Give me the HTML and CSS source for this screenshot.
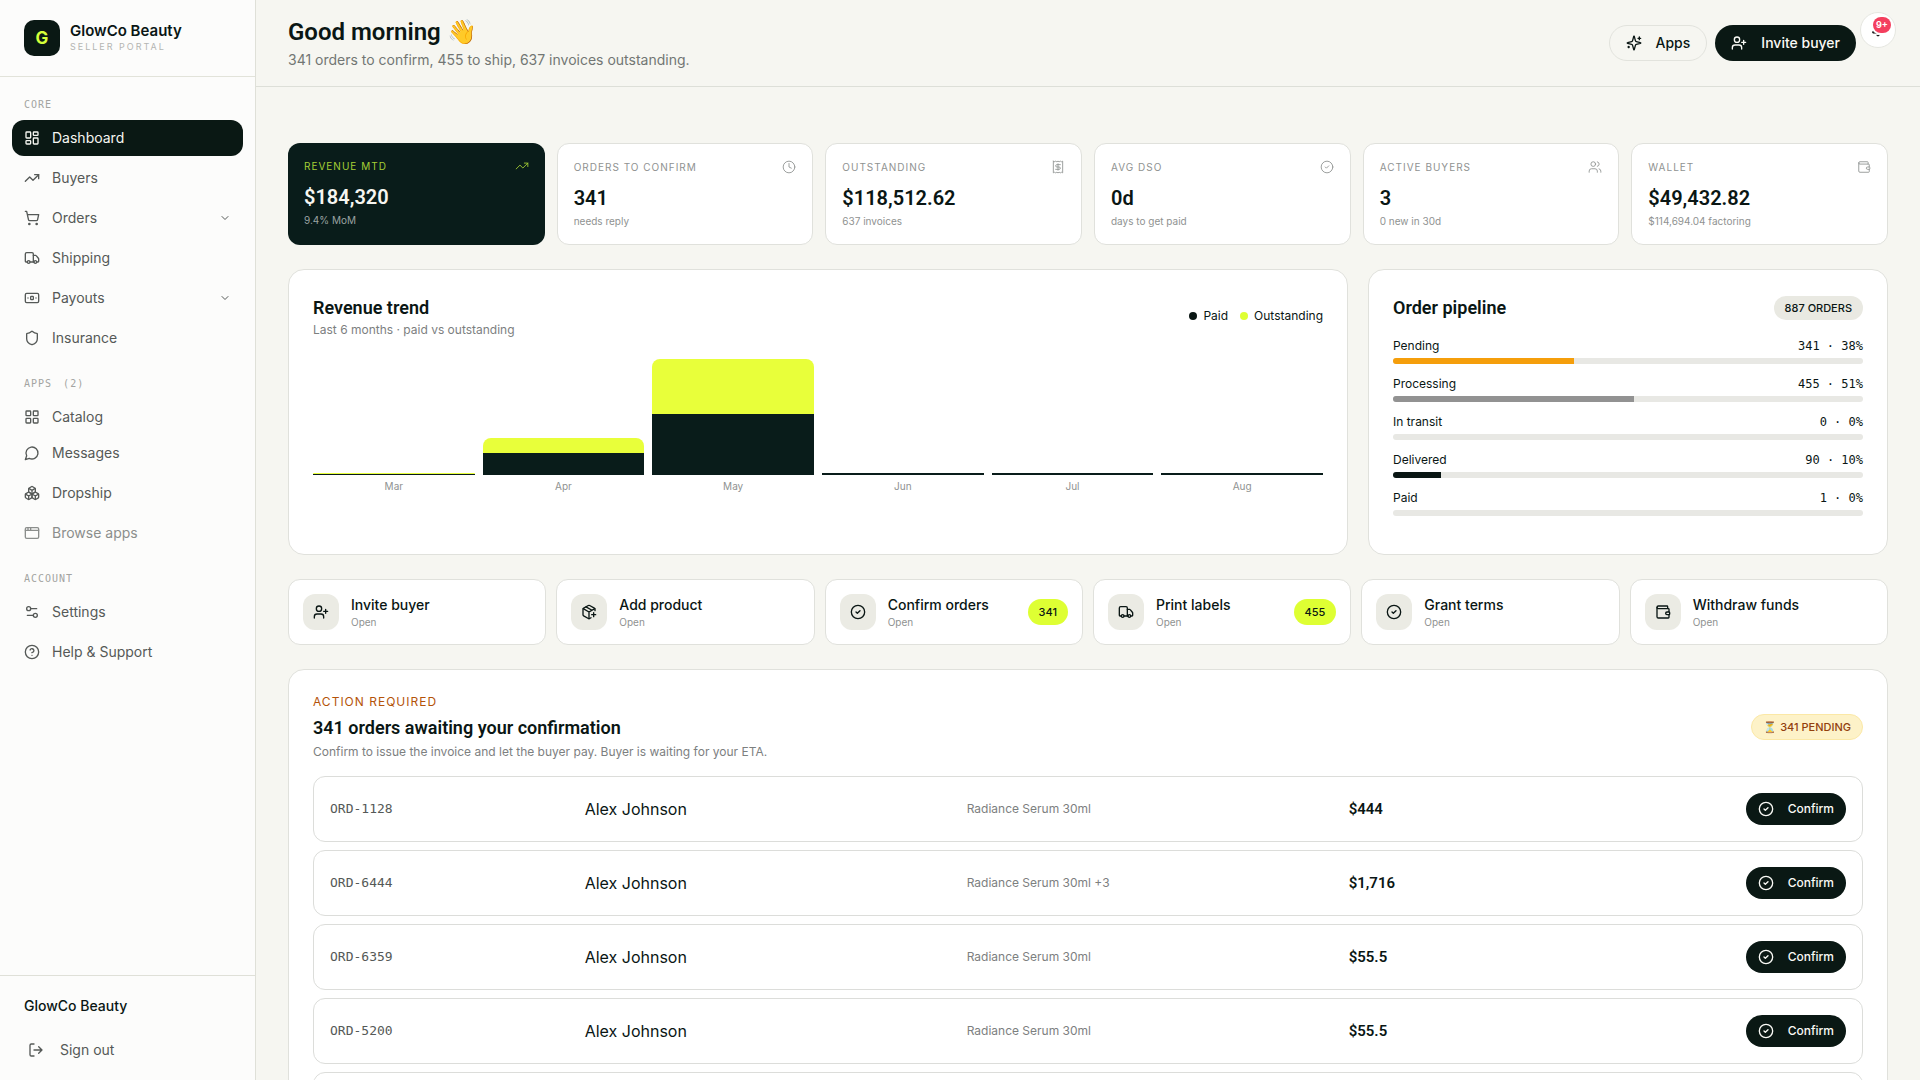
FILE: index.html
```html
<!DOCTYPE html>
<html lang="en">
<head>
    <meta charset="UTF-8">
    <meta name="viewport" content="width=device-width, initial-scale=1.0">
    <title>GlowCo Beauty - Seller Portal</title>
    <link rel="stylesheet" href="styles.css">
</head>
<body>
    <!-- Icon sprite -->
    <svg class="sprite" aria-hidden="true">
        <symbol id="i-dashboard" viewBox="0 0 24 24"><rect x="3" y="3" width="7" height="9" rx="1"/><rect x="14" y="3" width="7" height="5" rx="1"/><rect x="14" y="12" width="7" height="9" rx="1"/><rect x="3" y="16" width="7" height="5" rx="1"/></symbol>
        <symbol id="i-trend" viewBox="0 0 24 24"><path d="m22 7-8.5 8.5-5-5L2 17"/><path d="M16 7h6v6"/></symbol>
        <symbol id="i-cart" viewBox="0 0 24 24"><circle cx="8" cy="21" r="1"/><circle cx="19" cy="21" r="1"/><path d="M2 2h2l2.7 12.4a2 2 0 0 0 2 1.6h9.7a2 2 0 0 0 2-1.6L22 7H5.1"/></symbol>
        <symbol id="i-truck" viewBox="0 0 24 24"><path d="M14 18V6a2 2 0 0 0-2-2H4a2 2 0 0 0-2 2v11a1 1 0 0 0 1 1h2"/><path d="M15 18H9"/><path d="M19 18h2a1 1 0 0 0 1-1v-3.7a1 1 0 0 0-.2-.6l-3.5-4.3a1 1 0 0 0-.8-.4H14"/><circle cx="17" cy="18" r="2"/><circle cx="7" cy="18" r="2"/></symbol>
        <symbol id="i-banknote" viewBox="0 0 24 24"><rect x="2" y="5" width="20" height="14" rx="2"/><rect x="10" y="9.5" width="4" height="5" rx="1"/><path d="M6 12h.01M18 12h.01"/></symbol>
        <symbol id="i-shield" viewBox="0 0 24 24"><path d="M20 13c0 5-3.5 7.5-7.7 9a1 1 0 0 1-.6 0C7.5 20.5 4 18 4 13V6a1 1 0 0 1 1-1c2 0 4.5-1.2 6.2-2.7a1.2 1.2 0 0 1 1.6 0C14.500 3.8 17 5 19 5a1 1 0 0 1 1 1z"/></symbol>
        <symbol id="i-grid" viewBox="0 0 24 24"><rect x="3" y="3" width="7" height="7" rx="1"/><rect x="14" y="3" width="7" height="7" rx="1"/><rect x="14" y="14" width="7" height="7" rx="1"/><rect x="3" y="14" width="7" height="7" rx="1"/></symbol>
        <symbol id="i-message" viewBox="0 0 24 24"><path d="M7.9 20A9 9 0 1 0 4 16.1L2 22Z"/></symbol>
        <symbol id="i-boxes" viewBox="0 0 24 24"><path d="M2.97 12.92A2 2 0 0 0 2 14.63v3.24a2 2 0 0 0 .97 1.71l3 1.8a2 2 0 0 0 2.06 0L12 19v-5.5l-5-3-4.03 2.42Z"/><path d="m7 16.5-4.74-2.85M7 16.5l5-3M7 16.5v5.17"/><path d="M12 13.5V19l3.97 2.38a2 2 0 0 0 2.06 0l3-1.8a2 2 0 0 0 .97-1.71v-3.24a2 2 0 0 0-.97-1.71L17 10.5l-5 3Z"/><path d="m17 16.5-5-3M17 16.5l4.74-2.85M17 16.5v5.17"/><path d="M7.97 4.42A2 2 0 0 0 7 6.13v4.37l5 3 5-3V6.13a2 2 0 0 0-.97-1.71l-3-1.8a2 2 0 0 0-2.06 0l-3 1.8Z"/><path d="M12 8 7.26 5.15M12 8l4.74-2.85M12 13.5V8"/></symbol>
        <symbol id="i-window" viewBox="0 0 24 24"><rect x="2" y="4" width="20" height="16" rx="2"/><path d="M10 4v4M2 8h20M6 4v4"/></symbol>
        <symbol id="i-settings" viewBox="0 0 24 24"><path d="M14 17H5M19 7h-9"/><circle cx="17" cy="17" r="3"/><circle cx="7" cy="7" r="3"/></symbol>
        <symbol id="i-help" viewBox="0 0 24 24"><circle cx="12" cy="12" r="10"/><path d="M9.1 9a3 3 0 0 1 5.8 1c0 2-3 3-3 3M12 17h.01"/></symbol>
        <symbol id="i-logout" viewBox="0 0 24 24"><path d="M9 21H5a2 2 0 0 1-2-2V5a2 2 0 0 1 2-2h4"/><path d="m16 17 5-5-5-5M21 12H9"/></symbol>
        <symbol id="i-chevron" viewBox="0 0 24 24"><path d="m6 9 6 6 6-6"/></symbol>
        <symbol id="i-sparkles" viewBox="0 0 24 24"><path d="M9.9 15.5A2 2 0 0 0 8.5 14.1l-6.1-1.6a.5.5 0 0 1 0-1L8.5 9.9A2 2 0 0 0 9.9 8.5l1.6-6.1a.5.5 0 0 1 1 0l1.6 6.1a2 2 0 0 0 1.4 1.4l6.1 1.6a.5.5 0 0 1 0 1l-6.1 1.6a2 2 0 0 0-1.4 1.4l-1.6 6.1a.5.5 0 0 1-1 0z"/><path d="M20 3v4M22 5h-4M4 17v2M5 18H3"/></symbol>
        <symbol id="i-user-plus" viewBox="0 0 24 24"><path d="M16 21v-2a4 4 0 0 0-4-4H6a4 4 0 0 0-4 4v2"/><circle cx="9" cy="7" r="4"/><path d="M19 8v6M22 11h-6"/></symbol>
        <symbol id="i-bell" viewBox="0 0 24 24"><path d="M10.3 21a2 2 0 0 0 3.4 0"/><path d="M3.3 15.3A1 1 0 0 0 4 17h16a1 1 0 0 0 .7-1.7C19.4 14 18 12.5 18 8A6 6 0 0 0 6 8c0 4.5-1.4 6-2.7 7.3"/></symbol>
        <symbol id="i-clock" viewBox="0 0 24 24"><circle cx="12" cy="12" r="10"/><path d="M12 6v6l4 2"/></symbol>
        <symbol id="i-receipt" viewBox="0 0 24 24"><path d="M4 2v20l2-1 2 1 2-1 2 1 2-1 2 1 2-1 2 1V2l-2 1-2-1-2 1-2-1-2 1-2-1-2 1Z"/><path d="M16 8h-6a2 2 0 1 0 0 4h4a2 2 0 1 1 0 4H8M12 17.5v-11"/></symbol>
        <symbol id="i-check" viewBox="0 0 24 24"><circle cx="12" cy="12" r="10"/><path d="m9 12 2 2 4-4"/></symbol>
        <symbol id="i-users" viewBox="0 0 24 24"><path d="M16 21v-2a4 4 0 0 0-4-4H6a4 4 0 0 0-4 4v2"/><circle cx="9" cy="7" r="4"/><path d="M22 21v-2a4 4 0 0 0-3-3.9M16 3.1a4 4 0 0 1 0 7.8"/></symbol>
        <symbol id="i-wallet" viewBox="0 0 24 24"><path d="M19 7V4a1 1 0 0 0-1-1H5a2 2 0 0 0 0 4h15a1 1 0 0 1 1 1v4h-3a2 2 0 0 0 0 4h3a1 1 0 0 0 1-1v-2a1 1 0 0 0-1-1"/><path d="M3 5v14a2 2 0 0 0 2 2h15a1 1 0 0 0 1-1v-4"/></symbol>
        <symbol id="i-package" viewBox="0 0 24 24"><path d="M16 16h6M19 13v6"/><path d="M21 10V8a2 2 0 0 0-1-1.7l-7-4a2 2 0 0 0-2 0l-7 4A2 2 0 0 0 3 8v8a2 2 0 0 0 1 1.7l7 4a2 2 0 0 0 2 0l2-1.1"/><path d="m7.5 4.3 9 5.1M3.3 7l8.7 5 8.7-5M12 22V12"/></symbol>
    </svg>

    <div class="layout">
        <aside class="sidebar">
            <div class="brand">
                <div class="brand-logo">G</div>
                <div>
                    <div class="brand-name">GlowCo Beauty</div>
                    <div class="brand-sub">SELLER PORTAL</div>
                </div>
            </div>

            <nav class="nav">
                <div class="nav-label">CORE</div>
                <ul class="nav-list">
                    <li><a href="#" class="nav-item active"><svg class="icon"><use href="#i-dashboard"/></svg>Dashboard</a></li>
                    <li><a href="#" class="nav-item"><svg class="icon"><use href="#i-trend"/></svg>Buyers</a></li>
                    <li><a href="#" class="nav-item"><svg class="icon"><use href="#i-cart"/></svg>Orders<svg class="icon chevron"><use href="#i-chevron"/></svg></a></li>
                    <li><a href="#" class="nav-item"><svg class="icon"><use href="#i-truck"/></svg>Shipping</a></li>
                    <li><a href="#" class="nav-item"><svg class="icon"><use href="#i-banknote"/></svg>Payouts<svg class="icon chevron"><use href="#i-chevron"/></svg></a></li>
                    <li><a href="#" class="nav-item"><svg class="icon"><use href="#i-shield"/></svg>Insurance</a></li>
                </ul>

                <div class="nav-label">APPS <span class="nav-count">(2)</span></div>
                <a href="#" class="nav-item"><svg class="icon"><use href="#i-grid"/></svg>Catalog</a>
                <ul class="nav-list">
                    <li><a href="#" class="nav-item"><svg class="icon"><use href="#i-message"/></svg>Messages</a></li>
                    <li><a href="#" class="nav-item"><svg class="icon"><use href="#i-boxes"/></svg>Dropship</a></li>
                    <li><a href="#" class="nav-item muted"><svg class="icon"><use href="#i-window"/></svg>Browse apps</a></li>
                </ul>

                <div class="nav-label">ACCOUNT</div>
                <ul class="nav-list">
                    <li><a href="#" class="nav-item"><svg class="icon"><use href="#i-settings"/></svg>Settings</a></li>
                    <li><a href="#" class="nav-item"><svg class="icon"><use href="#i-help"/></svg>Help &amp; Support</a></li>
                </ul>
            </nav>

            <div class="sidebar-footer">
                <div class="account-name">GlowCo Beauty</div>
                <button type="button" class="sign-out"><svg class="icon"><use href="#i-logout"/></svg>Sign out</button>
            </div>
        </aside>

        <main class="main">
            <header class="topbar">
                <div>
                    <h1>Good morning 👋</h1>
                    <p>341 orders to confirm, 455 to ship, 637 invoices outstanding.</p>
                </div>
                <div class="topbar-actions">
                    <button type="button" class="btn btn-outline"><svg class="icon"><use href="#i-sparkles"/></svg>Apps</button>
                    <button type="button" class="btn btn-dark"><svg class="icon"><use href="#i-user-plus"/></svg>Invite buyer</button>
                </div>
                <button type="button" class="bell" aria-label="Notifications">
                    <svg class="icon"><use href="#i-bell"/></svg>
                    <span class="bell-count">9+</span>
                </button>
            </header>

            <div class="content">
                <section class="kpis">
                    <div class="kpi kpi-dark">
                        <div class="kpi-head">REVENUE MTD<svg class="icon"><use href="#i-trend"/></svg></div>
                        <div class="kpi-value">$184,320</div>
                        <div class="kpi-sub">9.4% MoM</div>
                    </div>
                    <div class="kpi">
                        <div class="kpi-head">ORDERS TO CONFIRM<svg class="icon"><use href="#i-clock"/></svg></div>
                        <div class="kpi-value">341</div>
                        <div class="kpi-sub">needs reply</div>
                    </div>
                    <div class="kpi">
                        <div class="kpi-head">OUTSTANDING<svg class="icon"><use href="#i-receipt"/></svg></div>
                        <div class="kpi-value">$118,512.62</div>
                        <div class="kpi-sub">637 invoices</div>
                    </div>
                    <div class="kpi">
                        <div class="kpi-head">AVG DSO<svg class="icon"><use href="#i-check"/></svg></div>
                        <div class="kpi-value">0d</div>
                        <div class="kpi-sub">days to get paid</div>
                    </div>
                    <div class="kpi">
                        <div class="kpi-head">ACTIVE BUYERS<svg class="icon"><use href="#i-users"/></svg></div>
                        <div class="kpi-value">3</div>
                        <div class="kpi-sub">0 new in 30d</div>
                    </div>
                    <div class="kpi">
                        <div class="kpi-head">WALLET<svg class="icon"><use href="#i-wallet"/></svg></div>
                        <div class="kpi-value">$49,432.82</div>
                        <div class="kpi-sub">$114,694.04 factoring</div>
                    </div>
                </section>

                <div class="panels">
                    <section class="card revenue">
                        <div class="card-head">
                            <div>
                                <h2>Revenue trend</h2>
                                <p class="card-sub">Last 6 months · paid vs outstanding</p>
                            </div>
                            <div class="legend">
                                <span class="legend-item"><span class="dot dot-paid"></span>Paid</span>
                                <span class="legend-item"><span class="dot dot-outstanding"></span>Outstanding</span>
                            </div>
                        </div>
                        <div class="chart">
                            <div class="month">
                                <div class="stack"><div class="bar-outstanding" style="height: 1px"></div><div class="bar-paid" style="height: 1px"></div></div>
                                <span>Mar</span>
                            </div>
                            <div class="month">
                                <div class="stack"><div class="bar-outstanding" style="height: 15px"></div><div class="bar-paid" style="height: 22px"></div></div>
                                <span>Apr</span>
                            </div>
                            <div class="month">
                                <div class="stack"><div class="bar-outstanding" style="height: 55px"></div><div class="bar-paid" style="height: 61px"></div></div>
                                <span>May</span>
                            </div>
                            <div class="month">
                                <div class="stack"><div class="bar-paid" style="height: 2px"></div></div>
                                <span>Jun</span>
                            </div>
                            <div class="month">
                                <div class="stack"><div class="bar-paid" style="height: 2px"></div></div>
                                <span>Jul</span>
                            </div>
                            <div class="month">
                                <div class="stack"><div class="bar-paid" style="height: 2px"></div></div>
                                <span>Aug</span>
                            </div>
                        </div>
                    </section>

                    <section class="card pipeline">
                        <div class="card-head">
                            <h2>Order pipeline</h2>
                            <span class="chip">887 ORDERS</span>
                        </div>
                        <div class="stage">
                            <div class="stage-row"><span>Pending</span><span class="mono">341 · 38%</span></div>
                            <div class="track"><div class="fill fill-pending" style="width: 38.5%"></div></div>
                        </div>
                        <div class="stage">
                            <div class="stage-row"><span>Processing</span><span class="mono">455 · 51%</span></div>
                            <div class="track"><div class="fill fill-processing" style="width: 51.3%"></div></div>
                        </div>
                        <div class="stage">
                            <div class="stage-row"><span>In transit</span><span class="mono">0 · 0%</span></div>
                            <div class="track"></div>
                        </div>
                        <div class="stage">
                            <div class="stage-row"><span>Delivered</span><span class="mono">90 · 10%</span></div>
                            <div class="track"><div class="fill fill-delivered" style="width: 10.2%"></div></div>
                        </div>
                        <div class="stage">
                            <div class="stage-row"><span>Paid</span><span class="mono">1 · 0%</span></div>
                            <div class="track"></div>
                        </div>
                    </section>
                </div>

                <section class="quick">
                    <a href="#" class="quick-item">
                        <span class="tile"><svg class="icon"><use href="#i-user-plus"/></svg></span>
                        <span class="quick-text"><span class="quick-title">Invite buyer</span><span class="quick-sub">Open</span></span>
                    </a>
                    <a href="#" class="quick-item">
                        <span class="tile"><svg class="icon"><use href="#i-package"/></svg></span>
                        <span class="quick-text"><span class="quick-title">Add product</span><span class="quick-sub">Open</span></span>
                    </a>
                    <a href="#" class="quick-item">
                        <span class="tile"><svg class="icon"><use href="#i-check"/></svg></span>
                        <span class="quick-text"><span class="quick-title">Confirm orders</span><span class="quick-sub">Open</span></span>
                        <span class="badge">341</span>
                    </a>
                    <a href="#" class="quick-item">
                        <span class="tile"><svg class="icon"><use href="#i-truck"/></svg></span>
                        <span class="quick-text"><span class="quick-title">Print labels</span><span class="quick-sub">Open</span></span>
                        <span class="badge">455</span>
                    </a>
                    <a href="#" class="quick-item">
                        <span class="tile"><svg class="icon"><use href="#i-check"/></svg></span>
                        <span class="quick-text"><span class="quick-title">Grant terms</span><span class="quick-sub">Open</span></span>
                    </a>
                    <a href="#" class="quick-item">
                        <span class="tile"><svg class="icon"><use href="#i-wallet"/></svg></span>
                        <span class="quick-text"><span class="quick-title">Withdraw funds</span><span class="quick-sub">Open</span></span>
                    </a>
                </section>

                <section class="card orders">
                    <div class="card-head">
                        <div>
                            <div class="eyebrow">ACTION REQUIRED</div>
                            <h2>341 orders awaiting your confirmation</h2>
                            <p class="card-sub">Confirm to issue the invoice and let the buyer pay. Buyer is waiting for your ETA.</p>
                        </div>
                        <span class="chip chip-amber">⏳ 341 PENDING</span>
                    </div>
                    <table class="order-table">
                        <tbody>
                            <tr>
                                <td class="mono order-id">ORD-1128</td>
                                <td class="buyer">Alex Johnson</td>
                                <td class="product">Radiance Serum 30ml</td>
                                <td class="amount">$444</td>
                                <td class="action"><button type="button" class="btn btn-dark btn-small"><svg class="icon"><use href="#i-check"/></svg>Confirm</button></td>
                            </tr>
                            <tr>
                                <td class="mono order-id">ORD-6444</td>
                                <td class="buyer">Alex Johnson</td>
                                <td class="product">Radiance Serum 30ml +3</td>
                                <td class="amount">$1,716</td>
                                <td class="action"><button type="button" class="btn btn-dark btn-small"><svg class="icon"><use href="#i-check"/></svg>Confirm</button></td>
                            </tr>
                            <tr>
                                <td class="mono order-id">ORD-6359</td>
                                <td class="buyer">Alex Johnson</td>
                                <td class="product">Radiance Serum 30ml</td>
                                <td class="amount">$55.5</td>
                                <td class="action"><button type="button" class="btn btn-dark btn-small"><svg class="icon"><use href="#i-check"/></svg>Confirm</button></td>
                            </tr>
                            <tr>
                                <td class="mono order-id">ORD-5200</td>
                                <td class="buyer">Alex Johnson</td>
                                <td class="product">Radiance Serum 30ml</td>
                                <td class="amount">$55.5</td>
                                <td class="action"><button type="button" class="btn btn-dark btn-small"><svg class="icon"><use href="#i-check"/></svg>Confirm</button></td>
                            </tr>
                            <tr>
                                <td class="mono order-id"></td>
                                <td class="buyer"></td>
                                <td class="product"></td>
                                <td class="amount"></td>
                                <td class="action"><button type="button" class="btn btn-dark btn-small"><svg class="icon"><use href="#i-check"/></svg>Confirm</button></td>
                            </tr>
                        </tbody>
                    </table>
                </section>
            </div>
        </main>
    </div>
</body>
</html>
```

FILE: styles.css
```css
* {
    box-sizing: border-box;
}
body {
    margin: 0;
    font-family: Inter, "Noto Sans", sans-serif;
    font-size: 14px;
    line-height: 20px;
    color: #0a1614;
    background-color: #f6f6f1;
}
h1, h2, p, ul {
    margin: 0;
    padding: 0;
}
ul {
    list-style: none;
}
a {
    color: inherit;
    text-decoration: none;
}
button {
    font: inherit;
    cursor: pointer;
}
.sprite {
    display: none;
}
.icon {
    width: 16px;
    height: 16px;
    flex: none;
    fill: none;
    stroke: currentColor;
    stroke-width: 2;
    stroke-linecap: round;
    stroke-linejoin: round;
}
.mono {
    font-family: "DejaVu Sans Mono", monospace;
}
.layout {
    display: flex;
    height: 100vh;
    overflow: hidden;
}

/* Sidebar */
.sidebar {
    width: 256px;
    flex: none;
    display: flex;
    flex-direction: column;
    background-color: #fcfcfb;
    border-right: 1px solid #dfe0d8;
}
.brand {
    display: flex;
    align-items: center;
    gap: 10px;
    padding: 20px 24px;
    border-bottom: 1px solid #e2e3da;
}
.brand-logo {
    width: 36px;
    height: 36px;
    border-radius: 10px;
    background-color: #0a1814;
    color: #d4ff3a;
    font-size: 17px;
    font-weight: 700;
    line-height: 36px;
    text-align: center;
}
.brand-name {
    font-size: 15px;
    line-height: 18px;
    font-weight: 600;
}
.brand-sub {
    font-size: 9px;
    line-height: 14px;
    letter-spacing: 2px;
    color: #b4b5b2;
}
.nav {
    flex: 1;
    padding: 20px 12px;
}
.nav-label {
    padding: 0 12px;
    margin-bottom: 8px;
    font-family: "DejaVu Sans Mono", monospace;
    font-size: 10px;
    line-height: 15px;
    letter-spacing: 1px;
    color: #a3a4a1;
}
.nav-count {
    margin-left: 4px;
}
.nav-list {
    display: flex;
    flex-direction: column;
    gap: 4px;
}
.nav-list + .nav-label {
    margin-top: 20px;
}
.nav-item {
    display: flex;
    align-items: center;
    gap: 12px;
    height: 36px;
    padding: 0 12px;
    border-radius: 12px;
    color: #555957;
}
.nav-item.active {
    background-color: #0a1814;
    color: #f6f6f1;
}
.nav-item.muted {
    color: #8b8e8c;
}
.nav-item .chevron {
    width: 12px;
    height: 12px;
    margin-left: auto;
}
.sidebar-footer {
    display: flex;
    flex-direction: column;
    gap: 16px;
    padding: 20px 12px 12px;
    border-top: 1px solid #dfe0d8;
}
.account-name {
    padding: 0 12px;
    font-weight: 500;
}
.sign-out {
    display: flex;
    align-items: center;
    gap: 16px;
    height: 36px;
    padding: 0 16px;
    border: 0;
    background: none;
    color: #555957;
}

/* Top bar */
.main {
    flex: 1;
    min-width: 0;
    overflow: hidden;
}
.topbar {
    position: relative;
    display: flex;
    align-items: center;
    justify-content: space-between;
    padding: 16px 64px 16px 32px;
    border-bottom: 1px solid #dddfd8;
}
.topbar h1 {
    margin-bottom: 2px;
    font-family: Roboto, sans-serif;
    font-size: 24px;
    line-height: 32px;
    font-weight: 600;
}
.topbar p {
    color: #727674;
}
.topbar-actions {
    display: flex;
    gap: 8px;
}
.btn {
    display: flex;
    align-items: center;
    gap: 14px;
    height: 36px;
    padding: 0 16px;
    border: 0;
    border-radius: 18px;
    font-weight: 500;
}
.btn-outline {
    border: 1px solid #e2e3dd;
    background-color: transparent;
    color: #0a1614;
}
.btn-dark {
    background-color: #0a1814;
    color: #fafaf6;
}
.btn-small {
    height: 32px;
    padding: 0 12px;
    font-size: 12px;
}
.bell {
    position: absolute;
    top: 12px;
    right: 24px;
    display: flex;
    align-items: center;
    justify-content: center;
    width: 36px;
    height: 36px;
    padding: 0;
    border: 1px solid #e6e7e1;
    border-radius: 50%;
    background-color: #fff;
}
.bell .icon {
    width: 14px;
    height: 14px;
}
.bell-count {
    position: absolute;
    top: 4px;
    right: 4px;
    width: 18px;
    height: 16px;
    border-radius: 8px;
    background-color: #f43f5e;
    box-shadow: 0 0 0 2px #fff;
    color: #fff;
    font-size: 9px;
    font-weight: 700;
    line-height: 16px;
    text-align: center;
}

/* Dashboard */
.content {
    display: flex;
    flex-direction: column;
    gap: 24px;
    padding: 56px 32px 32px;
}
.kpis {
    display: grid;
    grid-template-columns: repeat(6, 1fr);
    gap: 12px;
}
.kpi {
    padding: 16px;
    border: 1px solid #e0e1dc;
    border-radius: 12px;
    background-color: #fff;
}
.kpi-head {
    display: flex;
    align-items: center;
    justify-content: space-between;
    font-size: 10px;
    line-height: 14px;
    letter-spacing: 1px;
    color: #8f9291;
}
.kpi-head .icon {
    width: 14px;
    height: 14px;
    stroke-width: 1.5;
}
.kpi-value {
    margin: 10px 0 2px;
    font-family: Roboto, sans-serif;
    font-size: 20px;
    line-height: 28px;
    font-weight: 600;
}
.kpi-sub {
    font-size: 10px;
    line-height: 14px;
    color: #8f9291;
}
.kpi-dark {
    border: 0;
    background-color: #091c1a;
    color: #f6f6f1;
}
.kpi-dark .kpi-head {
    color: #a5cf35;
}
.kpi-dark .kpi-sub {
    color: #9aa3a1;
}
.card {
    padding: 24px;
    border: 1px solid #e0e1dc;
    border-radius: 16px;
    background-color: #fff;
}
.card-head {
    display: flex;
    align-items: center;
    justify-content: space-between;
}
.card h2 {
    font-family: Roboto, sans-serif;
    font-size: 18px;
    line-height: 28px;
    font-weight: 600;
}
.card-sub {
    font-size: 12px;
    line-height: 16px;
    color: #7d807f;
}
.panels {
    display: grid;
    grid-template-columns: repeat(12, 1fr);
    gap: 20px;
}
.revenue {
    grid-column: span 8;
}
.pipeline {
    grid-column: span 4;
}
.legend {
    display: flex;
    gap: 12px;
    font-size: 12px;
}
.legend-item {
    display: flex;
    align-items: center;
    gap: 6px;
}
.dot {
    width: 8px;
    height: 8px;
    border-radius: 50%;
}
.dot-paid {
    background-color: #0a1614;
}
.dot-outstanding {
    background-color: #deff33;
}
.chart {
    display: grid;
    grid-template-columns: repeat(6, 1fr);
    gap: 8px;
    height: 180px;
    margin-top: 12px;
}
.month {
    font-size: 10px;
    line-height: 14px;
    text-align: center;
    color: #8f9291;
}
.stack {
    display: flex;
    flex-direction: column;
    justify-content: flex-end;
    height: 125px;
    margin-bottom: 4px;
}
.bar-outstanding {
    border-radius: 8px 8px 0 0;
    background-color: #e8ff3a;
}
.bar-paid {
    background-color: #091c1a;
}
.pipeline .card-head {
    margin-bottom: 16px;
}
.chip {
    padding: 0 11px;
    border-radius: 12px;
    background-color: #e9e9e2;
    font-size: 11px;
    line-height: 24px;
    font-weight: 500;
}
.chip-amber {
    border: 1px solid #fbe8a6;
    border-radius: 13px;
    background-color: #fdf2c8;
    color: #92400e;
}
.stage {
    padding-bottom: 12px;
}
.stage-row {
    display: flex;
    justify-content: space-between;
    margin-bottom: 4px;
    font-size: 12px;
    line-height: 16px;
}
.track {
    height: 6px;
    border-radius: 3px;
    background-color: #e8e8e4;
    overflow: hidden;
}
.fill {
    height: 6px;
}
.fill-pending {
    background-color: #f59e0b;
}
.fill-processing {
    background-color: #929292;
}
.fill-delivered {
    background-color: #0a1614;
}

/* Quick actions */
.quick {
    display: grid;
    grid-template-columns: repeat(6, 1fr);
    gap: 10px;
}
.quick-item {
    display: flex;
    align-items: center;
    gap: 12px;
    padding: 14px;
    border: 1px solid #e0e1dc;
    border-radius: 12px;
    background-color: #fff;
}
.tile {
    display: flex;
    align-items: center;
    justify-content: center;
    width: 36px;
    height: 36px;
    border-radius: 12px;
    background-color: #ebebe4;
}
.quick-text {
    display: flex;
    flex-direction: column;
}
.quick-title {
    font-weight: 500;
    line-height: 20px;
}
.quick-sub {
    font-size: 10px;
    line-height: 14px;
    color: #8f9291;
}
.badge {
    margin-left: auto;
    padding: 0 11px;
    border-radius: 13px;
    background-color: #deff33;
    font-size: 11px;
    line-height: 26px;
    font-weight: 500;
}

/* Orders awaiting confirmation */
.eyebrow {
    margin-bottom: 4px;
    font-size: 12px;
    line-height: 16px;
    letter-spacing: 1px;
    color: #b45309;
}
.orders .card-sub {
    margin-top: 2px;
}
.order-table {
    display: block;
    margin-top: 16px;
}
.order-table tbody {
    display: flex;
    flex-direction: column;
    gap: 8px;
}
.order-table tr {
    display: grid;
    grid-template-columns: repeat(12, 1fr);
    gap: 12px;
    align-items: center;
    padding: 16px;
    border: 1px solid #dcddda;
    border-radius: 12px;
}
.order-table td {
    grid-column: span 3;
    padding: 0;
}
.order-table .order-id {
    grid-column: span 2;
    font-size: 13px;
    color: #555957;
}
.buyer {
    font-size: 16px;
}
.product {
    font-size: 12px;
    color: #7d807f;
}
.order-table .amount {
    grid-column: span 2;
    font-family: Roboto, sans-serif;
    font-size: 15px;
    font-weight: 600;
}
.order-table .action {
    grid-column: span 2;
    display: flex;
    justify-content: flex-end;
}
```
